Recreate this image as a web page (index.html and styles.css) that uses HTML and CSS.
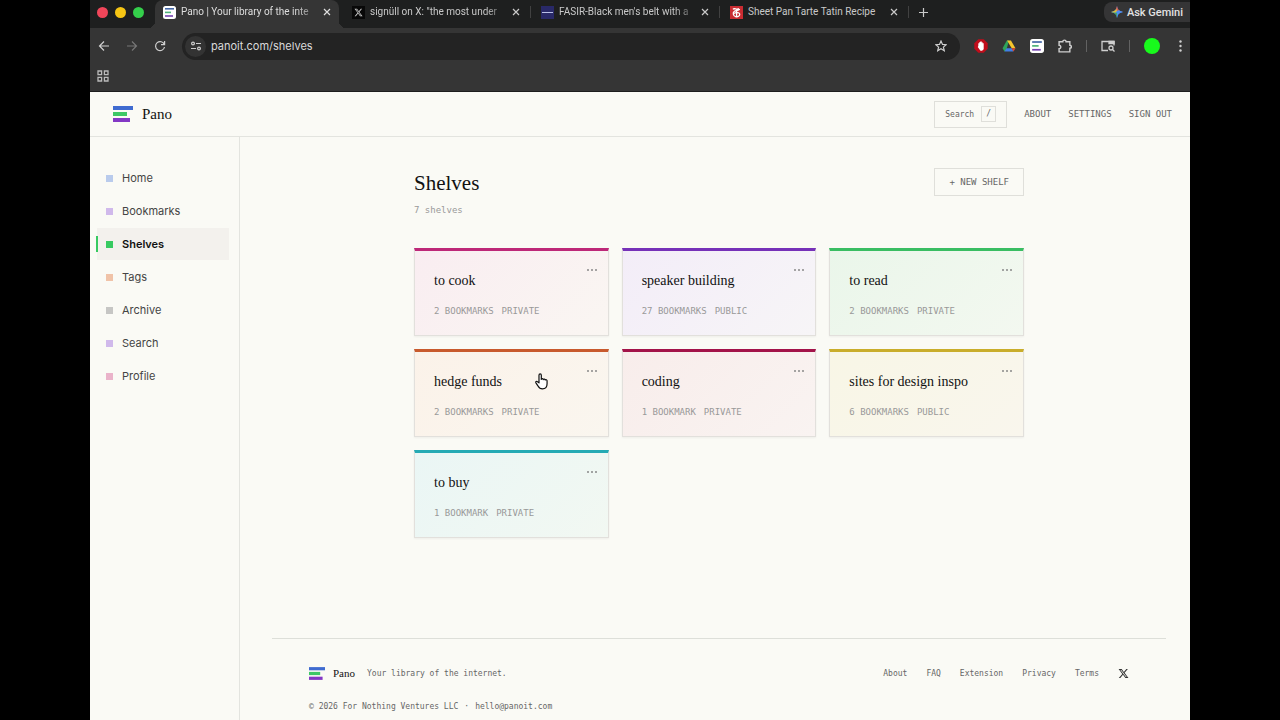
FILE: index.html
```html
<!DOCTYPE html>
<html lang="en">
<head>
  <meta charset="UTF-8">
  <meta name="viewport" content="width=device-width, initial-scale=1.0">
  <title>Pano | Your library of the internet</title>
  <link rel="stylesheet" href="styles.css">
</head>
<body>

<!-- shared icons -->
<svg class="defs" aria-hidden="true">
  <symbol id="pano" viewBox="0 0 20 16">
    <path fill="#3f6bd0" d="M0 0h20v4H0z"/>
    <path fill="#3ec766" d="M0 6h14v4H0z"/>
    <path fill="#8338c5" d="M0 12h17v4H0z"/>
  </symbol>
  <symbol id="x-logo" viewBox="0 0 24 24">
    <path fill="currentColor" d="M18.24 2.25h3.31l-7.23 8.26 8.5 11.24h-6.66l-5.21-6.82-5.97 6.82H1.68l7.73-8.84L1.25 2.25h6.83l4.71 6.23zm-1.16 17.52h1.83L7.08 4.13H5.12z"/>
  </symbol>
  <symbol id="close" viewBox="0 0 8 8">
    <path fill="none" stroke="currentColor" stroke-width="1.2" d="M1 1l6 6M7 1L1 7"/>
  </symbol>
  <symbol id="pano-app" viewBox="0 0 13 13">
    <rect width="13" height="13" rx="2.5" fill="#fff"/>
    <path fill="#4568a8" d="M2 2h9v1.6H2z"/>
    <path fill="#4fb37c" d="M2 5.6h6v1.6H2z"/>
    <path fill="#7440b0" d="M2 9.2h8v1.6H2z"/>
  </symbol>
</svg>

<div class="window">

  <div class="tabstrip">
    <div class="lights"><i class="red"></i><i class="yellow"></i><i class="green"></i></div>
    <div class="tab active">
      <svg class="favicon"><use href="#pano-app"/></svg>
      <a class="tab-title fade" href="#pano">Pano | Your library of the inte</a>
      <button class="tab-close" aria-label="Close tab"><svg><use href="#close"/></svg></button>
    </div>
    <div class="tab">
      <span class="favicon x-icon"><svg><use href="#x-logo"/></svg></span>
      <a class="tab-title fade" href="#x">signüll on X: "the most under</a>
      <button class="tab-close" aria-label="Close tab"><svg><use href="#close"/></svg></button>
    </div>
    <div class="tab">
      <svg class="favicon" viewBox="0 0 13 13"><path fill="#292968" d="M0 0h13v13H0z"/><path fill="#b9bfe8" d="M1 6h11v1H1z"/></svg>
      <a class="tab-title fade" href="#belt">FASIR-Black men's belt with a</a>
      <button class="tab-close" aria-label="Close tab"><svg><use href="#close"/></svg></button>
    </div>
    <div class="tab">
      <svg class="favicon" viewBox="0 0 13 13"><path fill="#c92c32" d="M0 0h13v13H0z"/><path fill="none" stroke="#fff" stroke-width="1.3" d="M3 3.4c1.400-2 3.400 1 6-.8M9.400 3c.5 1.500-3.500 1.300-5 2.200-1.800 1.100-1.600 5.100 1.600 5.600 2.100.3 3.600-.8 3.700-2.300.1-1.400-1.200-2.100-2.700-1.700M6.600 4v6.500M4 7.500l2-1"/></svg>
      <a class="tab-title" href="#recipe">Sheet Pan Tarte Tatin Recipe</a>
      <button class="tab-close" aria-label="Close tab"><svg><use href="#close"/></svg></button>
    </div>
    <button class="new-tab" aria-label="New tab"><svg viewBox="0 0 9 9"><path stroke="currentColor" stroke-width="1.2" d="M4.500 0v9M0 4.500h9"/></svg></button>
    <button class="gemini">
      <svg viewBox="0 0 12 12">
        <path fill="#4a8df0" d="M6 0c.5 3.700 2.300 5.500 6 6-3.700.5-5.500 2.300-6 6-.5-3.700-2.300-5.500-6-6 3.700-.5 5.500-2.300 6-6z"/>
        <path fill="#e25a4d" d="M6 0c.5 3.700 2.300 5.500 6 6L6 5 4.900 3.600z"/>
        <path fill="#e0bd3b" d="M0 6c3-.4 4.500-1.500 5.300-3.500L6 5 4 6.900z"/>
        <path fill="#4a8df0" d="M12 6c-3.700.5-5.500 2.300-6 6V5l1.500-.8z"/>
        <path fill="#41a768" d="M0 6c3.700.5 5.500 2.300 6 6V7z"/>
      </svg>
      Ask Gemini
    </button>
  </div>

  <div class="toolbar">
    <button class="tool" aria-label="Back"><svg viewBox="0 0 12 12"><path d="M11 6H1.500M6 1.500L1.500 6 6 10.500"/></svg></button>
    <button class="tool dim" aria-label="Forward"><svg viewBox="0 0 12 12"><path d="M1 6h9.500M6 1.500L10.500 6 6 10.500"/></svg></button>
    <button class="tool" aria-label="Reload"><svg viewBox="0 0 12 12"><path d="M10.300 4.500A4.500 4.500 0 1 0 10.500 7M10.600 1v3.700H7"/></svg></button>
    <div class="omnibox">
      <button class="site-info" aria-label="Site information"><svg viewBox="0 0 12 12"><circle cx="3" cy="3.500" r="1.400"/><path d="M6 3.500h5M1 8.500h5"/><circle cx="9" cy="8.500" r="1.400"/></svg></button>
      <input class="url" type="text" value="panoit.com/shelves" aria-label="Address">
      <button class="tool" aria-label="Bookmark this page"><svg viewBox="0 0 12 12"><path d="M6 1l1.500 3.400 3.700.3-2.800 2.400.9 3.600L6 8.800l-3.300 1.900.9-3.600L.8 4.700l3.700-.3z"/></svg></button>
    </div>
    <div class="extensions">
      <button class="ext" aria-label="Ad blocker"><svg viewBox="0 0 13 13"><path fill="#c00d1b" d="M4 .3h5L12.700 4v5L9 12.700H4L.3 9V4z"/><path fill="#fff" d="M4 6.500V4h1V2.700h1V2h1v1h1v1h1v5.500l-1.500 1.300H6L3.500 7.500z"/></svg></button>
      <button class="ext" aria-label="Drive"><svg viewBox="0 0 13 13"><path fill="#2fa35a" d="M4.500 1.500h2L4 10.500 2.300 11.500.5 8.500z"/><path fill="#f5c52d" d="M4.700 1.500h3.600l4.200 7H9z"/><path fill="#417fe6" d="M.5 8.500L2.300 11.500h8.400L9 8.500H4.200L2.300 11.500z"/><path fill="#dc4934" d="M8.800 8.500h3.700l-1.800 3z"/></svg></button>
      <button class="ext" aria-label="Pano"><svg viewBox="0 0 13 13"><use href="#pano-app"/></svg></button>
      <button class="ext line" aria-label="Extensions"><svg viewBox="0 0 13 13"><path d="M1 2.500h3.500a1.500 1.500 0 0 1 3 0H11v3.300a1.400 1.400 0 0 1 0 2.800V12H1V9a1.600 1.600 0 0 0 0-3.200z"/></svg></button>
      <span class="rule"></span>
      <button class="ext line" aria-label="Search tabs"><svg viewBox="0 0 14 13"><path d="M7 11H1V2h12v4"/><path fill="currentColor" d="M8 2h5v2H8z"/><circle cx="10" cy="8.500" r="2"/><path d="M11.500 10l2 2"/></svg></button>
      <span class="rule"></span>
      <button class="avatar" aria-label="Profile"></button>
      <button class="kebab" aria-label="Menu"><svg viewBox="0 0 3 12"><circle cx="1.500" cy="1.500" r="1.200"/><circle cx="1.500" cy="6" r="1.200"/><circle cx="1.500" cy="10.500" r="1.200"/></svg></button>
    </div>
  </div>

  <div class="bookmarks-bar">
    <button class="apps" aria-label="Apps"><svg viewBox="0 0 12 12"><path d="M1 1h3.600v3.600H1zM7.400 1H11v3.600H7.400zM1 7.400h3.600V11H1zM7.400 7.400H11V11H7.400z"/></svg></button>
  </div>

  <div class="page">
    <header class="site-header">
      <a class="brand" href="#home"><svg><use href="#pano"/></svg>Pano</a>
      <nav class="top-nav">
        <button class="search">Search <kbd>/</kbd></button>
        <a href="#about">ABOUT</a>
        <a href="#settings">SETTINGS</a>
        <a href="#signout">SIGN OUT</a>
      </nav>
    </header>

    <div class="layout">
      <nav class="sidebar">
        <a class="blue" href="#home">Home</a>
        <a class="purple" href="#bookmarks">Bookmarks</a>
        <a class="green current" href="#shelves">Shelves</a>
        <a class="orange" href="#tags">Tags</a>
        <a class="gray" href="#archive">Archive</a>
        <a class="purple" href="#search">Search</a>
        <a class="pink" href="#profile">Profile</a>
      </nav>

      <div class="content">
        <main class="shelves">
          <div class="shelves-head">
            <div>
              <h1>Shelves</h1>
              <p>7 shelves</p>
            </div>
            <button class="new-shelf">+ NEW SHELF</button>
          </div>

          <div class="grid">
            <article class="card magenta">
              <h2><a href="#to-cook">to cook</a></h2>
              <p><span>2 BOOKMARKS</span><span>PRIVATE</span></p>
              <button class="more" aria-label="Shelf options"><i></i><i></i><i></i></button>
            </article>
            <article class="card violet">
              <h2><a href="#speaker">speaker building</a></h2>
              <p><span>27 BOOKMARKS</span><span>PUBLIC</span></p>
              <button class="more" aria-label="Shelf options"><i></i><i></i><i></i></button>
            </article>
            <article class="card emerald">
              <h2><a href="#to-read">to read</a></h2>
              <p><span>2 BOOKMARKS</span><span>PRIVATE</span></p>
              <button class="more" aria-label="Shelf options"><i></i><i></i><i></i></button>
            </article>
            <article class="card rust">
              <h2><a href="#hedge">hedge funds</a></h2>
              <p><span>2 BOOKMARKS</span><span>PRIVATE</span></p>
              <button class="more" aria-label="Shelf options"><i></i><i></i><i></i></button>
              <svg class="cursor" viewBox="0 0 14 18"><path fill="#fff" stroke="#111" stroke-width="1.300" stroke-linejoin="round" d="M4.300 10.500V2.200c0-1.900 2.500-1.900 2.500 0v4.600c.3-1.300 2-1.200 2.200.1.500-.9 1.900-.7 2 .5.700-.8 2-.3 2 .9v3.200c0 3-1.800 5.500-5 5.500-2.600 0-3.700-1.200-4.700-3.100L1 10.400c-.7-1.300.8-2.200 1.700-1.200z"/></svg>
            </article>
            <article class="card crimson">
              <h2><a href="#coding">coding</a></h2>
              <p><span>1 BOOKMARK</span><span>PRIVATE</span></p>
              <button class="more" aria-label="Shelf options"><i></i><i></i><i></i></button>
            </article>
            <article class="card gold">
              <h2><a href="#design">sites for design inspo</a></h2>
              <p><span>6 BOOKMARKS</span><span>PUBLIC</span></p>
              <button class="more" aria-label="Shelf options"><i></i><i></i><i></i></button>
            </article>
            <article class="card teal">
              <h2><a href="#to-buy">to buy</a></h2>
              <p><span>1 BOOKMARK</span><span>PRIVATE</span></p>
              <button class="more" aria-label="Shelf options"><i></i><i></i><i></i></button>
            </article>
          </div>
        </main>

        <footer class="site-footer">
          <div class="footer-row">
            <a class="brand small" href="#home"><svg><use href="#pano"/></svg>Pano</a>
            <span class="tagline">Your library of the internet.</span>
            <nav class="footer-nav">
              <a href="#about">About</a>
              <a href="#faq">FAQ</a>
              <a href="#extension">Extension</a>
              <a href="#privacy">Privacy</a>
              <a href="#terms">Terms</a>
              <a class="x-link" href="#x" aria-label="X"><svg><use href="#x-logo"/></svg></a>
            </nav>
          </div>
          <p class="legal"><span>© 2026 For Nothing Ventures LLC</span><span>·</span><a href="mailto:hello@panoit.com">hello@panoit.com</a></p>
        </footer>
      </div>
    </div>
  </div>
</div>

</body>
</html>
```
FILE: styles.css
```css
* {
  box-sizing: border-box;
}
body {
  margin: 0;
  background: #000;
  font-family: Inter, "Liberation Sans", sans-serif;
  font-size: 11px;
  color: #444;
}
a {
  color: inherit;
  text-decoration: none;
}
button {
  display: flex;
  align-items: center;
  justify-content: center;
  padding: 0;
  border: 0;
  background: none;
  color: inherit;
  font: inherit;
}
h1, h2, p {
  margin: 0;
  font-weight: normal;
}
svg {
  display: block;
}
.defs {
  display: none;
}
.window {
  display: flex;
  flex-direction: column;
  min-height: 100vh;
  margin: 0 90px;
}

/* browser tabs */
.tabstrip {
  display: flex;
  height: 28px;
  background: #1e1f1f;
  color: #c9c9c9;
}
.lights {
  display: flex;
  align-items: center;
  gap: 7px;
  width: 65px;
  height: 24px;
  padding-left: 7px;
}
.lights i {
  width: 11px;
  height: 11px;
  border-radius: 50%;
}
.lights .red {
  background: #f1465a;
}
.lights .yellow {
  background: #f6c514;
}
.lights .green {
  background: #34cf4b;
}
.tab {
  display: flex;
  align-items: center;
  position: relative;
  width: 189px;
  height: 24px;
  padding: 0 13px 0 8px;
}
.tab:not(.active)::after {
  content: "";
  width: 1px;
  height: 12px;
  position: absolute;
  right: 2px;
  background: #414141;
}
.tab.active {
  width: 184px;
  height: 28px;
  margin-right: 5px;
  padding: 0 8px 4px;
  border-radius: 8px 8px 0 0;
  background: #353535;
  color: #dedede;
}
.tab.active::before, .tab.active::after {
  content: "";
  position: absolute;
  bottom: 0;
  width: 7px;
  height: 7px;
}
.tab.active::before {
  left: -7px;
  background: radial-gradient(circle at 0 0, #1e1f1f 7px, #353535 7px);
}
.tab.active::after {
  right: -7px;
  background: radial-gradient(circle at 100% 0, #1e1f1f 7px, #353535 7px);
}
.favicon {
  flex: none;
  width: 13px;
  height: 13px;
}
.x-icon {
  padding: 2px;
  background: #080808;
}
.x-icon svg {
  width: 9px;
  height: 9px;
}
.tab-title {
  flex: 1;
  margin: 0 4px 0 5px;
  white-space: nowrap;
  font: 10px/16px Roboto, sans-serif;
}
.fade {
  -webkit-mask-image: linear-gradient(90deg, #000 115px, transparent 140px);
  mask-image: linear-gradient(90deg, #000 115px, transparent 140px);
}
.tab-close svg {
  width: 8px;
  height: 8px;
}
.new-tab {
  width: 24px;
  height: 24px;
}
.new-tab svg {
  width: 9px;
  height: 9px;
}
.gemini {
  gap: 4px;
  height: 20px;
  margin: 2px 0 0 auto;
  padding: 0 7px;
  border-radius: 8px 0 0 8px;
  background: #353536;
  color: #e2e2e2;
  font: 500 11px Roboto, sans-serif;
}
.gemini svg {
  width: 12px;
  height: 12px;
}

/* address bar */
.toolbar {
  display: flex;
  align-items: center;
  height: 36px;
  padding: 0 8px;
  background: #353535;
  color: #cfcfcf;
}
.tool {
  width: 12px;
  height: 20px;
  margin-right: 16px;
}
.tool svg, .site-info svg {
  width: 12px;
  height: 12px;
  fill: none;
  stroke: currentColor;
  stroke-width: 1.2;
}
.dim {
  color: #777;
}
.omnibox {
  display: flex;
  flex: 1;
  align-items: center;
  gap: 5px;
  height: 27px;
  padding-left: 3px;
  border-radius: 14px;
  background: #232323;
}
.omnibox .tool {
  margin-right: 13px;
}
.site-info {
  width: 21px;
  height: 21px;
  border-radius: 50%;
  background: #333;
}
.url {
  flex: 1;
  min-width: 0;
  padding: 0;
  border: 0;
  background: none;
  color: #dadada;
  font: 11px Inter, "Liberation Sans", sans-serif;
}
.extensions {
  display: flex;
  align-items: center;
  gap: 14px;
  padding-left: 14px;
}
.ext, .ext svg {
  width: 14px;
  height: 14px;
}
.line svg {
  fill: none;
  stroke: currentColor;
  stroke-width: 1.3;
}
.rule {
  width: 1px;
  height: 12px;
  background: #626262;
}
.avatar {
  width: 16px;
  height: 16px;
  border-radius: 50%;
  background: #18fa1c;
}
.kebab {
  margin-left: 5px;
}
.kebab svg {
  width: 3px;
  height: 12px;
  fill: currentColor;
}
.bookmarks-bar {
  display: flex;
  height: 28px;
  padding: 6px 7px 0;
  border-bottom: 1px solid #1d1d1d;
  background: #353535;
  color: #bbb;
}
.apps {
  height: 12px;
}
.apps svg {
  width: 12px;
  height: 12px;
  fill: none;
  stroke: currentColor;
  stroke-width: 1.3;
}

/* Pano */
.page {
  display: flex;
  flex: 1;
  flex-direction: column;
  background: #fafaf5;
}
.site-header {
  display: flex;
  align-items: center;
  justify-content: space-between;
  height: 45px;
  padding: 0 18px 0 23px;
  border-bottom: 1px solid #e3e4df;
}
.brand {
  display: flex;
  align-items: center;
  gap: 9px;
  color: #111;
  font: 15px "Liberation Serif", serif;
}
.brand svg {
  width: 20px;
  height: 16px;
}
.brand.small {
  gap: 8px;
  font-size: 11px;
}
.brand.small svg {
  width: 16px;
  height: 13px;
}
.top-nav {
  display: flex;
  align-items: center;
  gap: 17px;
  color: #666;
  font: 9px "DejaVu Sans Mono", monospace;
}
.search {
  gap: 7px;
  height: 27px;
  padding: 0 10px;
  border: 1px solid #dfdfda;
  font-size: 8px;
}
.search kbd {
  width: 15px;
  border: 1px solid #dfdfda;
  font: inherit;
  line-height: 14px;
}
.layout {
  display: flex;
  flex: 1;
}
.sidebar {
  display: flex;
  flex: none;
  flex-direction: column;
  gap: 1px;
  width: 150px;
  padding: 25px 10px 0 7px;
  border-right: 1px solid #e3e4df;
}
.sidebar a {
  display: flex;
  align-items: center;
  gap: 9px;
  position: relative;
  height: 32px;
  padding-left: 9px;
}
.sidebar a::before {
  content: "";
  width: 7px;
  height: 7px;
  background: var(--dot);
}
.sidebar .current {
  background: #f3f1ed;
  color: #111;
  font-weight: 600;
}
.sidebar .current::after {
  content: "";
  position: absolute;
  left: -1px;
  width: 2px;
  height: 16px;
  background: var(--dot);
}
.blue { --dot: #b9cbec; }
.purple { --dot: #d0b9eb; }
.green { --dot: #37ca61; }
.orange { --dot: #f0c3a8; }
.gray { --dot: #c6c6c4; }
.pink { --dot: #eab3ca; }

.content {
  display: flex;
  flex: 1;
  flex-direction: column;
  padding: 0 24px 0 32px;
}
.shelves {
  flex: 1;
  width: 100%;
  max-width: 610px;
  margin: 0 auto;
  padding: 31px 0 100px;
}
.shelves-head {
  display: flex;
  align-items: flex-start;
  justify-content: space-between;
  margin-bottom: 32px;
}
.shelves h1 {
  color: #111;
  font: 21px/30px "Liberation Serif", serif;
}
.shelves-head p {
  margin-top: 6px;
  color: #999;
  font: 9px/12px "DejaVu Sans Mono", monospace;
}
.new-shelf {
  height: 28px;
  padding: 0 14px;
  border: 1px solid #dfdfda;
  color: #666;
  font: 9px "DejaVu Sans Mono", monospace;
}
.grid {
  display: grid;
  grid-template-columns: repeat(3, 1fr);
  gap: 13px;
}
.card {
  position: relative;
  height: 88px;
  padding: 20px 19px;
  border: 1px solid #e2e0dc;
  border-top: 3px solid var(--edge);
  background: linear-gradient(135deg, var(--tint), var(--fade));
  box-shadow: 0 1px 2px #0000000d;
}
.card h2 {
  color: #111;
  font: 14px/20px "Liberation Serif", serif;
  white-space: nowrap;
}
.card p {
  display: flex;
  gap: 8px;
  margin-top: 13px;
  color: #999;
  font: 9px/14px "DejaVu Sans Mono", monospace;
  white-space: nowrap;
}
.more {
  gap: 2px;
  position: absolute;
  top: 15px;
  right: 11px;
  height: 8px;
}
.more i {
  width: 2px;
  height: 2px;
  border-radius: 50%;
  background: #888;
}
.magenta { --edge: #bd2878; --tint: #f9edf1; --fade: #faf6f2; }
.violet { --edge: #7631b8; --tint: #f3edf8; --fade: #f7f5f7; }
.emerald { --edge: #39bd62; --tint: #eaf6ea; --fade: #f3f8f0; }
.rust { --edge: #c85a2d; --tint: #fbf2e9; --fade: #faf6ef; }
.crimson { --edge: #a31349; --tint: #f8edeb; --fade: #f9f3f1; }
.gold { --edge: #c9ad2b; --tint: #f8f6e6; --fade: #f9f6ed; }
.teal { --edge: #25aab4; --tint: #eaf6f5; --fade: #f2f8f2; }
.cursor {
  position: absolute;
  top: 21px;
  right: 60px;
  width: 13px;
  height: 17px;
}

.site-footer {
  padding: 26px 37px 7px;
  border-top: 1px solid #dddfd9;
  color: #666;
  font: 8px "DejaVu Sans Mono", monospace;
}
.footer-row {
  display: flex;
  align-items: center;
  height: 16px;
}
.tagline {
  margin-left: 12px;
}
.footer-nav {
  display: flex;
  align-items: center;
  gap: 19px;
  margin-left: auto;
}
.x-link svg {
  width: 11px;
  height: 11px;
  color: #333;
}
.legal {
  display: flex;
  gap: 6px;
  margin-top: 20px;
  line-height: 12px;
}
```
